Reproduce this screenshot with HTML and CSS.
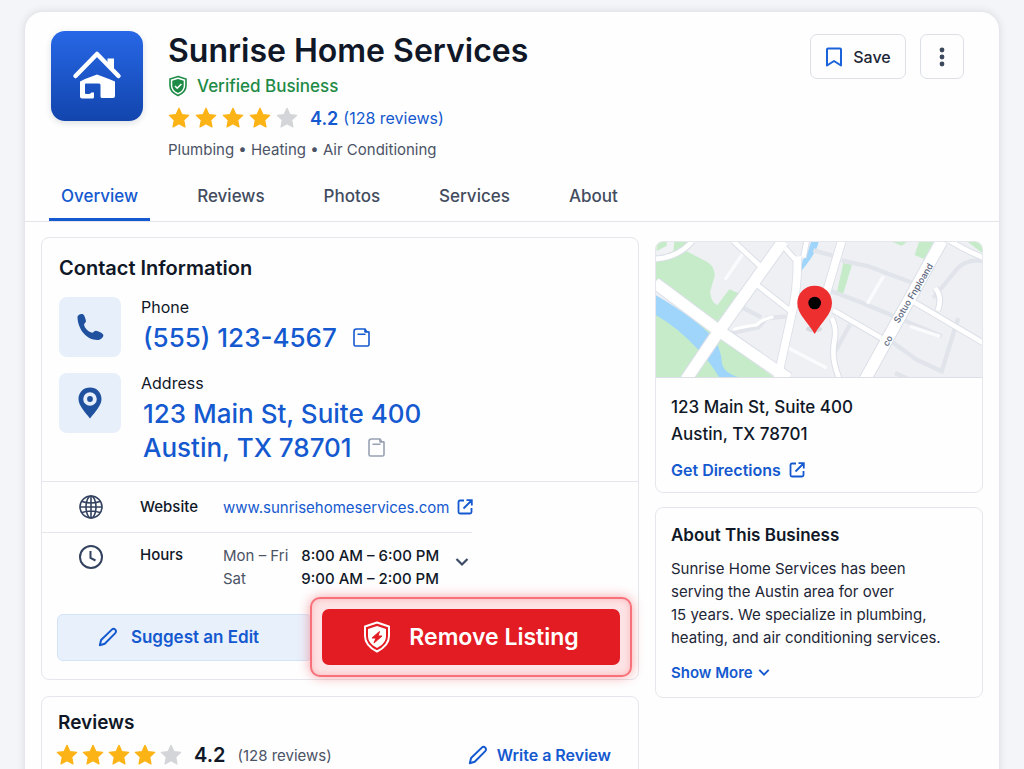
FILE: index.html
```html
<!DOCTYPE html>
<html lang="en">
<head>
    <meta charset="UTF-8">
    <meta name="viewport" content="width=device-width, initial-scale=1.0">
    <title>Sunrise Home Services</title>
    <link rel="stylesheet" href="styles.css">
</head>
<body>

<!-- shared icons -->
<svg class="sprite" aria-hidden="true">
    <symbol id="star" viewBox="0 0 22 22">
        <path d="M11 1.3l2.900 6.300 6.800.8-5 4.700 1.300 6.800-6-3.300-6 3.300 1.300-6.800-5-4.700 6.800-.8z" fill="currentColor" stroke="currentColor" stroke-width="1.2" stroke-linejoin="round"/>
    </symbol>
    <symbol id="pencil" viewBox="0 0 22 22">
        <path d="M2 20l1.400-5.600L15.200 2.900a2.600 2.600 0 0 1 3.800 3.800L7.400 18.400z" fill="none" stroke="currentColor" stroke-width="2.200" stroke-linejoin="round"/>
    </symbol>
    <symbol id="external" viewBox="0 0 16 16">
        <path d="M7 1.500H3A1.500 1.500 0 0 0 1.500 3v10A1.500 1.500 0 0 0 3 14.500h10a1.500 1.500 0 0 0 1.500-1.500V9M9.500 1.200h5.300v5.300M14.500 1.500L6.500 9.500" fill="none" stroke="currentColor" stroke-width="1.800"/>
    </symbol>
    <symbol id="note" viewBox="0 0 17 19">
        <path d="M3.500 1h8.500l1.500 2.500 2.500.5v12.500q0 1.500-1.500 1.500h-12Q1 18 1 16.500v-13Q1 1 3.500 1zM12 1v3h4M4.500 6.200h8" fill="none" stroke="currentColor" stroke-width="1.600" stroke-linejoin="round"/>
    </symbol>
    <symbol id="chevron" viewBox="0 0 14 10">
        <path d="M1.500 2L7 7.500 12.500 2" fill="none" stroke="currentColor" stroke-width="2.200"/>
    </symbol>
</svg>

<div id="app">
    <header class="header">
        <div class="logo">
            <svg viewBox="0 0 92 90" width="92" height="90" aria-hidden="true">
                <path d="M24.500 45L46 23l21.500 22" fill="none" stroke="#fff" stroke-width="4.500" stroke-linecap="round" stroke-linejoin="round"/>
                <path d="M56.500 27.500h6.500V39l-6.500-6z" fill="#fff"/>
                <path d="M29 50.500l5-2.500 12-4.500L58 48l6 2.500V65q0 2-2 2H51q-1.500 0-1.500-1.500V54q0-1.500-1.500-1.500H35q-1 0-1 1v8.500q0 1 1 1h2.500q1.500 0 3-1.500h2.500v4.500q0 1.500-1.500 1.500H31q-2 0-2-2z" fill="#fff"/>
            </svg>
        </div>
        <div class="business">
            <h1 class="title">Sunrise Home Services</h1>
            <div class="verified">
                <svg viewBox="0 0 20 22" width="20" height="22" aria-hidden="true">
                    <path d="M10 1.500l8 2.500v6.500c0 5-3.500 8-8 10-4.500-2-8-5-8-10V4z" fill="#fff" stroke="#1d8a45" stroke-width="1.600"/>
                    <path d="M10 4l5.700 1.800v4.700c0 3.700-2.400 5.900-5.700 7.500-3.300-1.600-5.700-3.800-5.700-7.500V5.800z" fill="#1d8a45"/>
                    <path d="M7 11l2.200 2.200L13.400 9" fill="none" stroke="#fff" stroke-width="1.600"/>
                </svg>
                Verified Business
            </div>
            <div class="rating">
                <span class="stars">
                    <svg><use href="#star"/></svg>
                    <svg><use href="#star"/></svg>
                    <svg><use href="#star"/></svg>
                    <svg><use href="#star"/></svg>
                    <svg class="empty"><use href="#star"/></svg>
                </span>
                <strong>4.2</strong>
                <a href="#reviews">(128 reviews)</a>
            </div>
            <div class="categories">Plumbing • Heating • Air Conditioning</div>
        </div>
        <div class="actions">
            <button class="outline-btn save-btn">
                <svg viewBox="0 0 18 20" width="18" height="20" aria-hidden="true"><path d="M3 1.500h12q1 0 1 1v16l-7-4.500-7 4.500v-16q0-1 1-1z" fill="none" stroke="#1a62d9" stroke-width="2" stroke-linejoin="round"/></svg>
                Save
            </button>
            <button class="outline-btn more-btn" aria-label="More options">
                <svg viewBox="0 0 6 20" width="6" height="20" aria-hidden="true"><g fill="#3c485c"><circle cx="3" cy="3" r="2.400"/><circle cx="3" cy="10" r="2.400"/><circle cx="3" cy="17" r="2.400"/></g></svg>
            </button>
        </div>
    </header>

    <nav class="tabs">
        <a class="active" href="#overview">Overview</a>
        <a href="#reviews">Reviews</a>
        <a href="#photos">Photos</a>
        <a href="#services">Services</a>
        <a href="#about">About</a>
    </nav>

    <main class="content">
        <div class="column main-column">
            <section class="card contact" id="overview">
                <h2>Contact Information</h2>
                <div class="contact-row">
                    <div class="tile">
                        <svg viewBox="0 0 28 28" width="28" height="28" aria-hidden="true"><path d="M1.500 4.500C1.200 2 5 .500 7 1.200c1.500.6 2.600 5 3 6.800.200 1.500-2.300 2.600-1.900 4.200 1 3.300 4 6.200 7.300 7.400 1.900.6 2.900-2.200 4.700-1.900 2.100.4 6.600 2.200 7.200 4.100.5 2-2.300 5-4.800 5.100C11.500 27.700 2 17 1.500 4.500z" fill="#1f519f"/></svg>
                    </div>
                    <div>
                        <div class="label">Phone</div>
                        <div class="big-line">
                            <a class="big-link" href="tel:5551234567">(555) 123-4567</a>
                            <button class="icon-btn" aria-label="Copy phone"><svg><use href="#note"/></svg></button>
                        </div>
                    </div>
                </div>
                <div class="contact-row">
                    <div class="tile">
                        <svg viewBox="0 0 24 32" width="24" height="32" aria-hidden="true"><path fill-rule="evenodd" d="M12 .5C5.500.500.500 5.300.500 12c0 6.500 6.500 13 11.500 19.500C17 25 23.500 18.500 23.500 12 23.500 5.300 18.500.500 12 .500zM12 5.200a6.800 6.800 0 1 1 0 13.600 6.800 6.800 0 0 1 0-13.600z" fill="#1f519f"/><circle cx="12" cy="12" r="2.900" fill="#1f519f"/></svg>
                    </div>
                    <div>
                        <div class="label">Address</div>
                        <div class="big-line"><a class="big-link" href="#map">123 Main St, Suite 400</a></div>
                        <div class="big-line">
                            <a class="big-link" href="#map">Austin, TX 78701</a>
                            <button class="icon-btn muted" aria-label="Copy address"><svg><use href="#note"/></svg></button>
                        </div>
                    </div>
                </div>

                <div class="info-row website">
                    <svg viewBox="0 0 26 26" width="26" height="26" aria-hidden="true"><g fill="none" stroke="#33435f" stroke-width="1.600"><circle cx="13" cy="13" r="11"/><ellipse cx="13" cy="13" rx="5" ry="11"/><path d="M2 13h22M4 7.500q9 3 18 0M4 18.500q9-3 18 0M13 2v22"/></g></svg>
                    <span class="label">Website</span>
                    <a href="#website">www.sunrisehomeservices.com <svg class="external"><use href="#external"/></svg></a>
                </div>
                <div class="info-row hours">
                    <svg viewBox="0 0 26 26" width="26" height="26" aria-hidden="true"><g fill="none" stroke="#33435f" stroke-width="2"><circle cx="13" cy="13" r="11"/><path d="M12.500 7v7l5 2.500"/></g></svg>
                    <span class="label">Hours</span>
                    <table>
                        <tr><th scope="row">Mon – Fri</th><td>8:00 AM – 6:00 PM</td></tr>
                        <tr><th scope="row">Sat</th><td>9:00 AM – 2:00 PM</td></tr>
                    </table>
                    <button class="icon-btn hours-toggle" aria-label="Show all hours"><svg><use href="#chevron"/></svg></button>
                </div>

                <div class="buttons">
                    <button class="suggest-btn"><svg><use href="#pencil"/></svg>Suggest an Edit</button>
                    <div class="glow">
                        <button class="remove-btn">
                            <svg viewBox="0 0 28 32" width="28" height="32" aria-hidden="true">
                                <path d="M14 1.500l12 4v9.500c0 7.500-5 12-12 15.500C7 27 2 22.500 2 15V5.500z" fill="none" stroke="#fff" stroke-width="2" stroke-linejoin="round"/>
                                <path d="M14 5l9 3v7c0 5.800-3.800 9-9 12-5.200-3-9-6.200-9-12V8z" fill="#fff"/>
                                <path d="M16.500 10.500L9 17h4l-2 5 8-7h-4z" fill="#e31b23" stroke="#e31b23" stroke-linejoin="round"/>
                            </svg>
                            Remove Listing
                        </button>
                    </div>
                </div>
            </section>

            <section class="card reviews" id="reviews">
                <h2>Reviews</h2>
                <div class="rating">
                    <span class="stars">
                        <svg><use href="#star"/></svg>
                        <svg><use href="#star"/></svg>
                        <svg><use href="#star"/></svg>
                        <svg><use href="#star"/></svg>
                        <svg class="empty"><use href="#star"/></svg>
                    </span>
                    <strong>4.2</strong>
                    <span class="count">(128 reviews)</span>
                    <a class="write" href="#write"><svg><use href="#pencil"/></svg>Write a Review</a>
                </div>
            </section>
        </div>

        <aside class="column side-column">
            <section class="card location" id="map">
                <svg class="map" viewBox="18 37 978 405" preserveAspectRatio="xMidYMid slice" role="img" aria-label="Map">
                    <rect x="15" y="34" width="984" height="410" fill="#eef0f4"/>
                    <!-- parks -->
                    <g fill="#c5ebc9">
                        <path d="M15 34h100l-20 40-75 20v-60z"/>
                        <path d="M15 95l95-30 62 32q22 14 22 42l-14 48q4 32 22 40l36-48 28 12-62 112L15 147z"/>
                        <path d="M15 200l190 120 165 122H15z"/>
                        <path d="M720 34h55l-20 14zM808 34h44l-30 54-28-12zM950 34h50v38zM580 100l26 5-28 92-18-6z"/>
                    </g>
                    <path d="M62 34l-2 22-40 20" fill="none" stroke="#f1f2f5" stroke-width="22"/>
                    <!-- river -->
                    <path d="M15 195q120 70 170 125 28 30 32 86 8 24 46 36h-56q-30-50-62-82Q80 290 15 255z" fill="#9fd5fb"/>
                    <path d="M484 34h22q-2 30-54 92l6-34q16-20 26-58z" fill="#9fd5fb"/>
                    <!-- side streets -->
                    <g fill="none" stroke="#e1e4ea" stroke-width="13">
                        <path d="M490 62l58 16M575 92l80 18 160 60M545 185l80 30 250 105M280 235l54 28M410 260l-60 6-24 26-78 18M600 285l-50 90M710 325l90 65 75 35 50-160M735 430l40 18M1000 95q-50-10-80 24L850 205"/>
                    </g>
                    <path d="M415 355l115 60M280 70l-55 80M700 140l-48 82M870 320l-90-30" fill="none" stroke="#fafbfc" stroke-width="10"/>
                    <!-- roads, grey casing below white -->
                    <g fill="none" stroke="#dbdfe7" stroke-width="20">
                        <path d="M15 88q70-4 112-54M250 34l80 75M320 165l100 78M405 55l35 40M470 34l-10 50M550 242l145 84M545 265q16 30 8 70-10 50 14 110M780 210l220 130M900 34q50 30 100 50M855 175q24 26 8 68"/>
                        <path d="M575 34l-50 170M442 80q2 80-14 160l-45 205" stroke-width="28"/>
                        <path d="M400 34L210 300 108 450M15 160l190 142 210 145M875 34L645 450" stroke-width="40"/>
                    </g>
                    <g fill="none" stroke="#fff" stroke-width="14">
                        <path d="M15 88q70-4 112-54M250 34l80 75M320 165l100 78M405 55l35 40M470 34l-10 50M550 242l145 84M545 265q16 30 8 70-10 50 14 110M780 210l220 130M900 34q50 30 100 50M855 175q24 26 8 68"/>
                        <path d="M250 300q20-8 70-14 18-20 50-24" stroke-width="9"/>
                        <path d="M575 34l-50 170M442 80q2 80-14 160l-45 205" stroke-width="23"/>
                        <path d="M400 34L210 300 108 450M15 160l190 142 210 145M875 34L645 450" stroke-width="34"/>
                    </g>
                    <g class="street-name">
                        <text transform="translate(746 282) rotate(-59)">Sotuo Fnploand</text>
                        <text transform="translate(713 352) rotate(-59)">co</text>
                    </g>
                    <!-- pin -->
                    <ellipse cx="492" cy="298" rx="24" ry="10" fill="#8a93a3" opacity=".25"/>
                    <path d="M494 168c-30 0-52 23-52 52 0 34 32 58 52 93 20-35 52-59 52-93 0-29-22-52-52-52z" fill="#ee2f30"/>
                    <circle cx="494" cy="220" r="19"/>
                </svg>
                <div class="location-text">
                    <div class="address">123 Main St, Suite 400<br>Austin, TX 78701</div>
                    <a class="link" href="#directions">Get Directions <svg class="external"><use href="#external"/></svg></a>
                </div>
            </section>

            <section class="card about" id="about">
                <h3>About This Business</h3>
                <p>Sunrise Home Services has been<br>serving the Austin area for over<br>15 years. We specialize in plumbing,<br>heating, and air conditioning services.</p>
                <a class="link" href="#more">Show More <svg class="chevron"><use href="#chevron"/></svg></a>
            </section>
        </aside>
    </main>
</div>

</body>
</html>
```
FILE: styles.css
```css
* {
    box-sizing: border-box;
}
body {
    font-family: Inter, "Liberation Sans", sans-serif;
    font-size: 15px;
    background-color: #f4f5f8;
    color: #101828;
    margin: 0;
    height: 100vh;
    overflow: hidden;
}
h1, h2, h3, p {
    margin: 0;
}
a {
    color: #1459cf;
    text-decoration: none;
}
button {
    font-family: inherit;
    cursor: pointer;
    padding: 0;
}
svg {
    flex-shrink: 0;
}
.sprite {
    position: absolute;
    width: 0;
    height: 0;
}
#app {
    margin: 12px 25px 0;
    background-color: #fefefe;
    border-radius: 18px;
    box-shadow: 0 0 8px rgba(30, 41, 70, 0.15);
}

/* header */
.header {
    display: flex;
    padding: 19px 35px 0 26px;
}
.logo {
    width: 92px;
    height: 90px;
    margin-right: 25px;
    border-radius: 14px;
    background: linear-gradient(#2767e6, #1245ad);
    box-shadow: 0 2px 6px rgba(30, 41, 70, 0.15);
}
.business {
    flex: 1;
}
.title {
    font-size: 32px;
    line-height: 39px;
    font-weight: 600;
}
.verified {
    display: flex;
    align-items: center;
    gap: 9px;
    height: 32px;
    font-size: 17px;
    font-weight: 500;
    color: #1d8a45;
}
.rating {
    display: flex;
    align-items: center;
}
.header .rating {
    height: 32px;
    font-size: 16px;
    color: #1459cf;
}
.stars {
    display: flex;
    gap: 5px;
    margin-right: 12px;
    color: #fcb316;
}
.stars svg {
    width: 22px;
    height: 22px;
}
.stars .empty {
    color: #d4d5d8;
}
.rating strong {
    font-size: 18px;
    font-weight: 600;
    margin-right: 5px;
}
.categories {
    line-height: 32px;
    color: #4b5365;
}
.actions {
    display: flex;
    gap: 14px;
    padding-top: 3px;
}
.outline-btn {
    display: flex;
    align-items: center;
    justify-content: center;
    height: 45px;
    background-color: #fefefe;
    border: 1px solid #dcdfe6;
    border-radius: 7px;
}
.save-btn {
    width: 96px;
    gap: 10px;
    font-size: 16px;
    font-weight: 500;
    color: #1d2636;
}
.more-btn {
    width: 44px;
}

/* tabs */
.tabs {
    display: flex;
    gap: 35px;
    padding: 8px 24px 0;
    border-bottom: 1px solid #e3e5ea;
}
.tabs a {
    padding: 0 12px;
    line-height: 44px;
    font-size: 17px;
    font-weight: 500;
    color: #434c5e;
    border-bottom: 3px solid transparent;
}
.tabs .active {
    color: #1459cf;
    border-color: #1459cf;
}

/* content */
.content {
    display: grid;
    grid-template-columns: 1fr 328px;
    gap: 16px;
    padding: 15px 16px;
}
.column {
    display: flex;
    flex-direction: column;
    gap: 16px;
    min-width: 0;
}
.side-column {
    gap: 14px;
    padding-top: 4px;
}
.card {
    border: 1px solid #e5e7ec;
    border-radius: 8px;
}
h2 {
    font-size: 20px;
    line-height: 24px;
    font-weight: 600;
}
.contact {
    padding-top: 18px;
}
.contact h2 {
    padding: 0 17px;
    margin-bottom: 14px;
}
.contact-row {
    display: flex;
    gap: 20px;
    padding: 0 17px;
    margin-bottom: 13px;
}
.tile {
    display: flex;
    align-items: center;
    justify-content: center;
    width: 62px;
    height: 60px;
    margin-top: 3px;
    background-color: #e7effa;
    border-radius: 8px;
}
.label {
    line-height: 22px;
    font-weight: 500;
}
.contact-row .label {
    font-size: 16px;
    line-height: 26px;
    font-weight: 400;
}
.big-line {
    display: flex;
    align-items: center;
    gap: 16px;
    height: 34px;
    padding-left: 2px;
}
.big-link {
    font-size: 26px;
    font-weight: 500;
}
.icon-btn {
    display: flex;
    background: none;
    border: none;
    color: #1459cf;
}
.icon-btn svg {
    width: 17px;
    height: 19px;
}
.icon-btn.muted {
    color: #98a1b2;
}
.info-row {
    display: grid;
    grid-template-columns: 98px 83px auto 1fr;
}
.info-row > svg {
    justify-self: center;
}
.website {
    align-items: center;
    height: 51px;
    margin-top: 17px;
    border-top: 1px solid #e5e7ec;
}
.website a {
    display: flex;
    align-items: center;
    gap: 8px;
}
.external {
    width: 16px;
    height: 16px;
}
.hours {
    align-items: start;
    padding: 12px 0 7px;
    position: relative;
}
.hours::before {
    content: "";
    position: absolute;
    top: 0;
    left: 0;
    width: 430px;
    border-top: 1px solid #e5e7ec;
}
.hours table {
    border-spacing: 0;
    line-height: 23px;
}
.hours th {
    padding: 0 13px 0 0;
    font-weight: 400;
    text-align: left;
    color: #4b5365;
}
.hours td {
    padding: 0;
    font-weight: 500;
}
.hours-toggle {
    margin: 13px 0 0 16px;
    color: #3c4a66;
}
.hours-toggle svg {
    width: 14px;
    height: 10px;
}
.buttons {
    display: flex;
    align-items: center;
    padding: 0 6px 2px 15px;
}
.suggest-btn {
    display: flex;
    align-items: center;
    justify-content: center;
    gap: 13px;
    flex: 1;
    height: 47px;
    margin-right: -2px;
    padding-right: 12px;
    font-size: 17px;
    font-weight: 600;
    color: #1459cf;
    background-color: #e8f0fb;
    border: 1px solid #d3e3f8;
    border-radius: 6px;
}
.suggest-btn svg, .write svg {
    width: 20px;
    height: 20px;
}
.glow {
    z-index: 1;
    width: 322px;
    padding: 10px;
    background-color: #fde3e5;
    border: 2px solid #f8717a;
    border-radius: 10px;
    box-shadow: 0 0 12px rgba(240, 50, 60, 0.45), inset 0 0 6px rgba(240, 50, 60, 0.25);
}
.remove-btn {
    display: flex;
    align-items: center;
    justify-content: center;
    gap: 18px;
    width: 100%;
    height: 56px;
    font-size: 23px;
    font-weight: 600;
    color: white;
    background-color: #e31b23;
    border: none;
    border-radius: 7px;
}
.reviews {
    padding: 14px 27px 20px 14px;
}
.reviews h2 {
    padding-left: 2px;
    font-size: 19px;
}
.reviews .rating {
    margin-top: 4px;
    height: 32px;
}
.reviews .stars {
    gap: 4px;
}
.reviews strong {
    font-size: 20px;
    margin-right: 12px;
}
.count {
    color: #4b5365;
}
.write {
    display: flex;
    align-items: center;
    gap: 9px;
    margin-left: auto;
    font-size: 16px;
    font-weight: 600;
}

/* sidebar */
.map {
    display: block;
    width: 100%;
    aspect-ratio: 326 / 136;
    border-bottom: 1px solid #dcdfe6;
    border-radius: 7px 7px 0 0;
}
.street-name {
    font-size: 27px;
    font-weight: 500;
    fill: #5c6780;
}
.location-text {
    padding: 16px 15px 10px;
}
.address {
    font-size: 17px;
    line-height: 27px;
    font-weight: 500;
}
.link {
    display: flex;
    align-items: center;
    gap: 8px;
    height: 24px;
    font-weight: 600;
}
.location .link {
    margin-top: 10px;
    font-size: 16px;
}
.about {
    padding: 15px 15px 13px;
}
h3 {
    font-size: 17px;
    line-height: 24px;
    font-weight: 600;
}
.about p {
    margin: 10px 0 11px;
    line-height: 23px;
    color: #1d2636;
}
.about .link {
    gap: 5px;
}
.chevron {
    width: 12px;
    height: 9px;
}
```
